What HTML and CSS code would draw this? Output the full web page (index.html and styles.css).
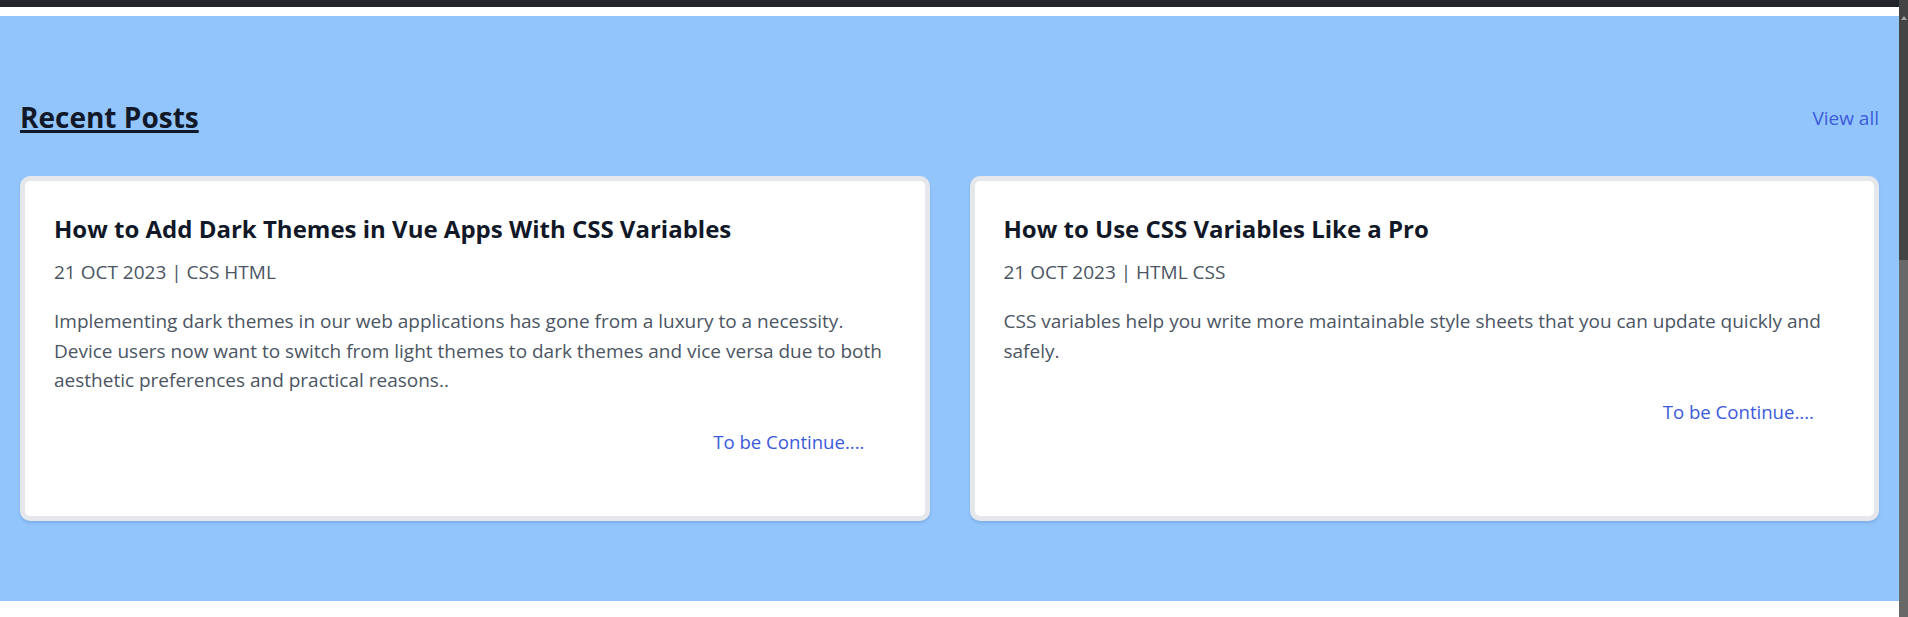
FILE: index.html
```html
<!DOCTYPE html>
<html lang="en">
<head>
<meta charset="utf-8">
<title>Recent Posts</title>
<link rel="stylesheet" href="styles.css">
</head>
<body>
<div class="frame">
  <div class="page">
    <div class="topbar"></div>
    <div class="spacer"></div>
    <section class="recent">
      <div class="recent-head">
        <h2 class="recent-title">Recent Posts</h2>
        <a class="view-all" href="#">View all</a>
      </div>
      <div class="cards">
        <article class="card">
          <h3 class="card-title">How to Add Dark Themes in Vue Apps With CSS Variables</h3>
          <p class="card-meta">21 OCT 2023 | CSS HTML</p>
          <p class="card-text">Implementing dark themes in our web applications has gone from a luxury to a necessity. Device users now want to switch from light themes to dark themes and vice versa due to both aesthetic preferences and practical reasons..</p>
          <div class="card-more"><a href="#">To be Continue....</a></div>
        </article>
        <article class="card">
          <h3 class="card-title">How to Use CSS Variables Like a Pro</h3>
          <p class="card-meta">21 OCT 2023 | HTML CSS</p>
          <p class="card-text">CSS variables help you write more maintainable style sheets that you can update quickly and safely.</p>
          <div class="card-more"><a href="#">To be Continue....</a></div>
        </article>
      </div>
    </section>
  </div>
  <div class="scrollbar">
    <div class="scroll-arrow"></div>
    <div class="scroll-thumb"></div>
  </div>
</div>
</body>
</html>
```
FILE: styles.css
```css
* { box-sizing: border-box; }
html, body { margin: 0; padding: 0; background: #ffffff; }
body {
  font-family: "Open Sans", "Noto Sans", sans-serif;
  color: #111827;
  height: 617px;
  overflow: hidden;
}
.frame { display: flex; height: 617px; }
.page { flex: 1; min-width: 0; background: #fff; }
.topbar { height: 7px; background: #212529; }
.spacer { height: 9px; background: #fff; }

.recent {
  background: #93c5fd;
  height: 585px;
  padding: 83px 20px 0 20px;
}
.recent-head {
  display: flex;
  justify-content: space-between;
  align-items: center;
  height: 36px;
}
.recent-title {
  margin: 0;
  font-size: 28px;
  line-height: 36px;
  font-weight: 700;
  color: #111827;
  text-decoration: underline;
  text-decoration-thickness: 3px;
  text-underline-offset: 2px;
}
.view-all {
  font-size: 19px;
  line-height: 28px;
  color: #3b5bdb;
  text-decoration: none;
  margin-top: 1px;
}

.cards {
  margin-top: 41px;
  display: grid;
  grid-template-columns: 1fr 1fr;
  column-gap: 40px;
}
.card {
  background: #fff;
  border: 5px solid #e5e7eb;
  border-radius: 10px;
  box-shadow: 0 2px 3px rgba(30, 64, 120, 0.18);
  padding: 32px 30px 32px 29px;
  display: flex;
  flex-direction: column;
}
.card-title {
  margin: 0;
  font-size: 24px;
  line-height: 32px;
  font-weight: 700;
  color: #111827;
}
.card-meta {
  margin: 13px 0 0 0;
  font-size: 19px;
  line-height: 28px;
  color: #4b5563;
}
.card-text {
  margin: 21px 0 0 0;
  font-size: 19px;
  line-height: 29.7px;
  color: #4b5563;
}
.card-more {
  margin: 32px 0 28px 0;
  text-align: right;
  padding-right: 30px;
  font-size: 18.6px;
  line-height: 28px;
}
.card-more a {
  color: #3b5bdb;
  text-decoration: none;
}

.scrollbar {
  width: 9px;
  background: #444444;
  display: flex;
  flex-direction: column;
  align-items: center;
}
.scroll-arrow {
  margin-top: 16px;
  width: 0;
  height: 0;
  border-left: 3px solid transparent;
  border-right: 3px solid transparent;
  border-bottom: 4px solid #a3a3a3;
}
.scroll-thumb {
  margin-top: 240px;
  width: 9px;
  height: 357px;
  background: #686868;
}
```
